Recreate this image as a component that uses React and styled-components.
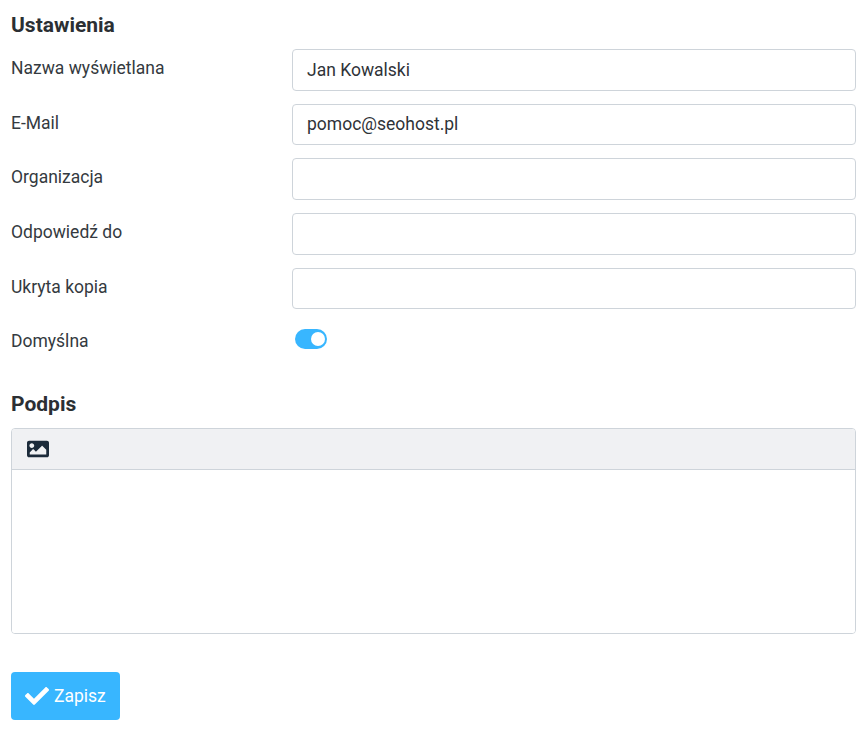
import React from "react";
import styled, { createGlobalStyle } from "styled-components";
import { FaCheck, FaImage } from "react-icons/fa";

const GlobalStyle = createGlobalStyle`
  body {
    margin: 0;
    background: #fff;
    font-family: Roboto, "Liberation Sans", sans-serif;
    font-size: 17.5px;
    color: #2f3338;
  }
`;

const fields = [
  { label: "Nazwa wyświetlana", value: "Jan Kowalski" },
  { label: "E-Mail", value: "pomoc@seohost.pl" },
  { label: "Organizacja", value: "" },
  { label: "Odpowiedź do", value: "" },
  { label: "Ukryta kopia", value: "" },
];

const App = () => {
  return (
    <Page>
      <GlobalStyle />
      <SectionTitle>Ustawienia</SectionTitle>
      <Fields>
        {fields.map((field) => (
          <FieldRow key={field.label}>
            <FieldLabel>{field.label}</FieldLabel>
            <TextInput type="text" defaultValue={field.value} />
          </FieldRow>
        ))}
        <ToggleRow>
          <FieldLabel>Domyślna</FieldLabel>
          <Toggle>
            <ToggleKnob />
          </Toggle>
        </ToggleRow>
      </Fields>
      <SignatureTitle>Podpis</SignatureTitle>
      <Editor>
        <EditorToolbar>
          <FaImage size={22} />
        </EditorToolbar>
        <EditorBody />
      </Editor>
      <SaveButton type="button">
        <FaCheck size={24} />
        Zapisz
      </SaveButton>
    </Page>
  );
};

const Page = styled.div`
  width: 864px;
  height: 734px;
  box-sizing: border-box;
  padding: 13px 8px 0 11px;
  overflow: hidden;
`;

const SectionTitle = styled.h2`
  margin: 0;
  font-size: 21px;
  line-height: 24px;
  font-weight: 700;
  color: #2b2f33;
`;

const Fields = styled.div`
  display: flex;
  flex-direction: column;
  margin-top: 12px;
`;

const FieldRow = styled.div`
  display: grid;
  grid-template-columns: 281px 1fr;
  height: 54.7px;
`;

const ToggleRow = styled(FieldRow)`
  height: 49px;
`;

const FieldLabel = styled.label`
  line-height: 24px;
  padding-top: 7px;
  color: #343a40;
`;

const TextInput = styled.input`
  box-sizing: border-box;
  width: 100%;
  height: 41.5px;
  padding: 0 14px;
  border: 1px solid #ced4da;
  border-radius: 4px;
  background: #fff;
  font-family: inherit;
  font-size: 17.5px;
  color: #2f3338;
  outline: none;
`;

const Toggle = styled.span`
  display: flex;
  align-items: center;
  justify-content: flex-end;
  width: 32px;
  height: 20px;
  margin: 7px 0 0 3px;
  padding: 0 2px;
  box-sizing: border-box;
  border-radius: 10px;
  background: #38b6ff;
`;

const ToggleKnob = styled.span`
  width: 14px;
  height: 14px;
  border-radius: 50%;
  background: #fff;
`;

const SignatureTitle = styled(SectionTitle)`
  margin-top: 21px;
`;

const Editor = styled.div`
  margin-top: 12px;
  height: 204px;
  border: 1px solid #ced4da;
  border-radius: 4px;
  display: flex;
  flex-direction: column;
  overflow: hidden;
`;

const EditorToolbar = styled.div`
  display: flex;
  align-items: center;
  height: 40px;
  flex-shrink: 0;
  padding-left: 15px;
  background: #f0f1f3;
  border-bottom: 1px solid #ced4da;
  color: #1c2b3a;
`;

const EditorBody = styled.div`
  flex: 1;
  background: #fff;
`;

const SaveButton = styled.button`
  display: flex;
  align-items: center;
  gap: 5px;
  margin-top: 38px;
  height: 48px;
  padding: 0 14px;
  border: none;
  border-radius: 4px;
  background: #38b6ff;
  color: #fff;
  font-family: inherit;
  font-size: 17.5px;
`;

export default App;
